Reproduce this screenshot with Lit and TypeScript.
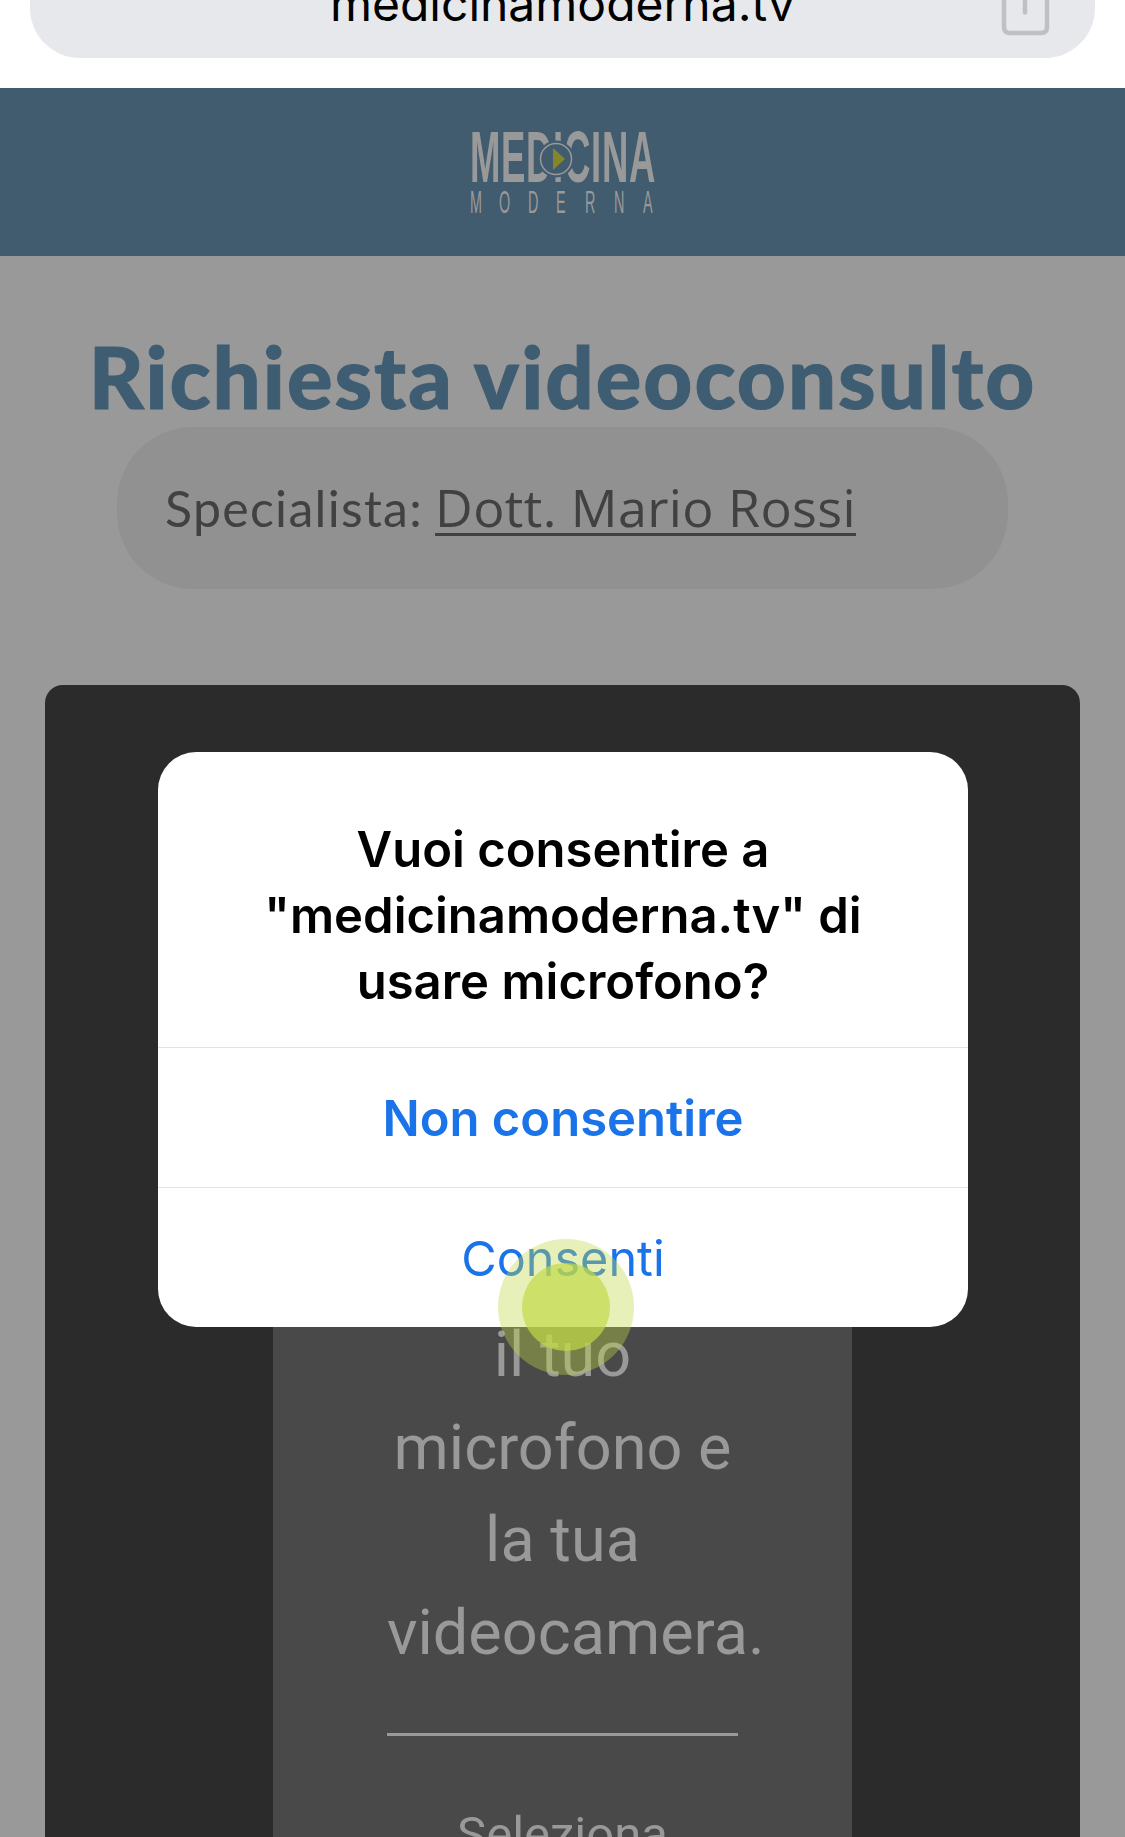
import { LitElement, html, css, svg } from "lit";
import { customElement } from "lit/decorators.js";

const shareIcon = svg`<svg width="50" height="36" viewBox="0 0 50 36" fill="none" stroke="#c0c0c2" stroke-width="4.5" stroke-linecap="round" stroke-linejoin="round">
  <path d="M4 -6 V27 Q4 33 10 33 H41 Q47 33 47 27 V-6" />
  <path d="M25 -14 V12.5" />
</svg>`;

@customElement("app-root")
export class AppRoot extends LitElement {
  static styles = css`
    :host {
      display: block;
      width: 1125px;
      height: 1837px;
      overflow: hidden;
      position: relative;
      background: #fff;
      font-family: "Inter", sans-serif;
    }
    .top {
      height: 88px;
      background: #fff;
      padding: 0 30px;
      box-sizing: border-box;
    }
    .url {
      height: 58px;
      background: #e7e8ec;
      border-radius: 0 0 50px 50px;
      position: relative;
      display: flex;
      justify-content: center;
      align-items: flex-end;
      overflow: hidden;
    }
    .url-text {
      font-family: "Inter", "Liberation Sans", sans-serif;
      font-size: 48px;
      line-height: 58px;
      color: #000;
      margin-bottom: 25px;
    }
    .share {
      position: absolute;
      right: 45px;
      top: 0;
      height: 36px;
    }
    .header {
      height: 168px;
      background: #415c6e;
      display: flex;
      align-items: center;
      justify-content: center;
    }
    .logo {
      width: 185px;
      display: flex;
      flex-direction: column;
      color: #999;
      font-family: "Liberation Sans", sans-serif;
    }
    .logo-main {
      position: relative;
      display: flex;
      justify-content: space-between;
      font-size: 73px;
      font-weight: 700;
      line-height: 52px;
      height: 52px;
    }
    .logo-main span {
      display: block;
      transform: scaleX(0.5);
      transform-origin: left center;
    }
    .w30 { width: 30px; }
    .w24 { width: 24px; }
    .w26 { width: 26px; }
    .w10 { width: 10px; }
    .logo-play {
      position: absolute;
      left: 66px;
      top: 8px;
    }
    .logo-sub {
      display: flex;
      justify-content: space-between;
      font-size: 32px;
      line-height: 24px;
      height: 24px;
      margin-top: 7px;
    }
    .logo-sub span {
      display: block;
      width: 12px;
      transform: scaleX(0.45);
      transform-origin: left center;
    }
    .page {
      background: #999;
      height: 1581px;
      display: flex;
      flex-direction: column;
      align-items: center;
      padding-top: 70px;
      box-sizing: border-box;
      overflow: hidden;
    }
    h1 {
      flex: none;
      margin: 0;
      font-family: "Lato", sans-serif;
      font-weight: 900;
      font-size: 85px;
      line-height: 101px;
      letter-spacing: 2px;
      -webkit-text-stroke: 1px #3f5d72;
      color: #3f5d72;
      white-space: nowrap;
    }
    .pill {
      flex: none;
      width: 891px;
      height: 162px;
      background: #919191;
      border-radius: 76px;
      display: flex;
      align-items: center;
      padding-left: 48px;
      box-sizing: border-box;
      color: #414141;
      white-space: nowrap;
    }
    .pill-line {
      font-size: 50px;
      line-height: 60px;
    }
    .label {
      font-family: "Lato", sans-serif;
      letter-spacing: 1.3px;
      margin-right: 12px;
    }
    .name {
      font-family: "Open Sans", sans-serif;
      font-size: 52px;
      letter-spacing: 0.4px;
      text-decoration: underline;
      text-decoration-thickness: 3px;
      text-underline-offset: 6px;
    }
    .card {
      flex: none;
      width: 1035px;
      height: 1152px;
      margin-top: 96px;
      padding-top: 200px;
      box-sizing: border-box;
      background: #2b2b2b;
      border-radius: 18px 18px 0 0;
      display: flex;
      justify-content: center;
    }
    .panel {
      width: 579px;
      background: #494949;
      display: flex;
      flex-direction: column;
      align-items: center;
      padding-top: 424px;
      box-sizing: border-box;
      color: #999;
      font-family: "Roboto", sans-serif;
      font-weight: 400;
      font-size: 63px;
      line-height: 92.5px;
      text-align: center;
      overflow: hidden;
    }
    .message {
      flex: none;
      width: 351px;
    }
    .rule {
      flex: none;
      width: 351px;
      height: 3px;
      background: #999;
      margin-top: 54px;
    }
    .choose {
      flex: none;
      font-size: 49px;
      line-height: 60px;
      margin-top: 69px;
    }
    .dialog {
      position: absolute;
      left: 158px;
      top: 752px;
      width: 810px;
      height: 575px;
      background: #fff;
      border-radius: 38px;
      display: flex;
      flex-direction: column;
      overflow: hidden;
    }
    .dialog-title {
      flex: none;
      height: 296px;
      padding-top: 65px;
      box-sizing: border-box;
      font-size: 49px;
      line-height: 66px;
      font-weight: 600;
      color: #000;
      text-align: center;
      border-bottom: 1px solid #e2e2e2;
    }
    .btn {
      flex: none;
      height: 140px;
      box-sizing: border-box;
      display: flex;
      align-items: center;
      justify-content: center;
      font-size: 48.5px;
      color: #1a73e8;
    }
    .btn.primary {
      font-size: 49px;
      font-weight: 600;
      padding-top: 2px;
      border-bottom: 1px solid #e2e2e2;
    }
    .touch {
      position: absolute;
      left: 498px;
      top: 1239px;
      width: 136px;
      height: 136px;
      border-radius: 50%;
      background: rgba(193, 216, 72, 0.38);
      display: flex;
      align-items: center;
      justify-content: center;
    }
    .touch::after {
      content: "";
      width: 88px;
      height: 88px;
      border-radius: 50%;
      background: rgba(193, 216, 72, 0.7);
    }
  `;

  render() {
    return html`
      <div class="top">
        <div class="url">
          <span class="url-text">medicinamoderna.tv</span>
          <span class="share">${shareIcon}</span>
        </div>
      </div>
      <div class="header">
        <div class="logo">
          <div class="logo-main">
            <span class="w30">M</span>
            <span class="w24">E</span>
            <span class="w26">D</span>
            <span class="w10">I</span>
            <span class="w26">C</span>
            <span class="w10">I</span>
            <span class="w26">N</span>
            <span class="w26">A</span>
            <svg class="logo-play" width="40" height="40" viewBox="0 0 40 40">
              <circle cx="20" cy="20" r="18.5" fill="#415c6e" />
              <circle cx="20" cy="20" r="15.5" fill="none" stroke="#999" stroke-width="1.5" />
              <path d="M17 9 L29 20 L17 31 Z" fill="#85862a" />
            </svg>
          </div>
          <div class="logo-sub">
            ${"MODERNA".split("").map((c) => html`<span>${c}</span>`)}
          </div>
        </div>
      </div>
      <div class="page">
        <h1>Richiesta videoconsulto</h1>
        <div class="pill">
          <div class="pill-line">
            <span class="label">Specialista:</span><span class="name">Dott. Mario Rossi</span>
          </div>
        </div>
        <div class="card">
          <div class="panel">
            <div class="message">il tuo microfono e la tua videocamera.</div>
            <div class="rule"></div>
            <div class="choose">Seleziona</div>
          </div>
        </div>
      </div>
      <div class="dialog">
        <div class="dialog-title">
          <div>Vuoi consentire a</div>
          <div>"medicinamoderna.tv" di</div>
          <div>usare microfono?</div>
        </div>
        <div class="btn primary">Non consentire</div>
        <div class="btn">Consenti</div>
      </div>
      <div class="touch"></div>
    `;
  }
}
